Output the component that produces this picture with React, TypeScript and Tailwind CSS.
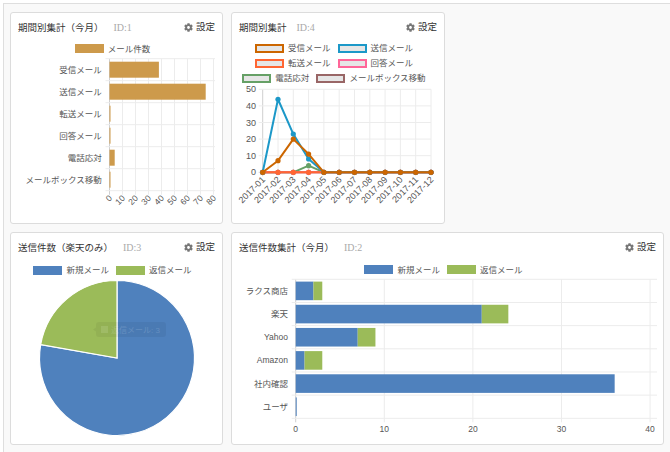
import type { ReactNode } from "react"
import { FaCog } from "react-icons/fa"

const BAR_TAN = "#cd9a4b"
const BLUE = "#4f81bd"
const GREEN = "#9bbb59"

function Card({
  title,
  id,
  className,
  children,
}: {
  title: string
  id: string
  className: string
  children: ReactNode
}) {
  return (
    <div className={`flex flex-col rounded-[3px] border border-[#dcdcdc] bg-white ${className}`}>
      <div className="flex h-[29px] shrink-0 items-center justify-between px-[7px]">
        <div className="flex items-baseline gap-[10px]">
          <span className="text-[9.5px] text-[#333]">{title}</span>
          <span className="font-['Liberation_Serif',serif] text-[10px] text-[#aaa]">{id}</span>
        </div>
        <div className="flex items-center gap-[3px] text-[9.5px] text-[#333]">
          <FaCog className="h-[9px] w-[9px] text-[#777]" />
          設定
        </div>
      </div>
      {children}
    </div>
  )
}

function LegendItem({ label, fill, stroke }: { label: string; fill: string; stroke?: string }) {
  return (
    <div className="flex items-center gap-[4px]">
      <span
        className={`block h-[9px] w-[29px] ${stroke ? "border-2" : ""}`}
        style={{ backgroundColor: fill, borderColor: stroke }}
      />
      <span className="text-[8.5px] leading-[10px] text-[#555]">{label}</span>
    </div>
  )
}

// 期間別集計（今月）: horizontal bars
function PeriodBarChart() {
  const x0 = 98.5
  const top = 4.7
  const rowH = 22
  const labels = ["受信メール", "送信メール", "転送メール", "回答メール", "電話応対", "メールボックス移動"]
  const values = [38, 74, 0, 0, 4, 0]
  const bottom = top + rowH * 6
  return (
    <svg width={211} height={169} className="block">
      {Array.from({ length: 9 }).map((_, i) => (
        <line
          key={i}
          x1={x0 + i * 13}
          x2={x0 + i * 13}
          y1={top}
          y2={bottom + 4}
          stroke={i === 0 ? "#cfcfcf" : "#ececec"}
        />
      ))}
      {Array.from({ length: 7 }).map((_, k) => (
        <line key={k} x1={x0 - 4} x2={204} y1={top + k * rowH} y2={top + k * rowH} stroke="#ececec" />
      ))}
      {values.map((v, k) => (
        <rect key={k} x={x0} y={top + k * rowH + 3} width={Math.max(v * 1.3, 1)} height={16} fill={BAR_TAN} />
      ))}
      {labels.map((l, k) => (
        <text key={l} x={90.7} y={top + k * rowH + 11} dy="0.35em" textAnchor="end" fontSize={8.5} fill="#555">
          {l}
        </text>
      ))}
      {Array.from({ length: 9 }).map((_, i) => {
        const x = x0 + i * 13 + 3
        const y = bottom + 8
        return (
          <text key={i} x={x} y={y} textAnchor="end" fontSize={8.5} fill="#555" transform={`rotate(-45 ${x} ${y})`}>
            {i * 10}
          </text>
        )
      })}
    </svg>
  )
}

// 期間別集計: line chart
function PeriodLineChart() {
  const xs = Array.from({ length: 12 }).map((_, i) => 30.7 + i * 15.3)
  const y0 = 88.3
  const yv = (v: number) => y0 - v * 1.66
  const zero = Array(12).fill(0)
  const sets = [
    { color: "#996666", data: zero },
    { color: "#66a066", data: [0, 0, 0, 4, 0, 0, 0, 0, 0, 0, 0, 0] },
    { color: "#ff6699", data: zero },
    { color: "#ff6633", data: zero },
    { color: "#1c98c8", data: [0, 44, 23, 8, 0, 0, 0, 0, 0, 0, 0, 0] },
    { color: "#cc6600", data: [0, 7, 20, 11, 0, 0, 0, 0, 0, 0, 0, 0] },
  ]
  return (
    <svg width={212} height={139} className="block">
      {xs.map((x, i) => (
        <line key={i} x1={x} x2={x} y1={yv(50)} y2={y0 + 4} stroke={i === 0 ? "#cfcfcf" : "#ececec"} />
      ))}
      {[0, 10, 20, 30, 40, 50].map((v) => (
        <g key={v}>
          <line x1={26.7} x2={199} y1={yv(v)} y2={yv(v)} stroke={v === 0 ? "#cfcfcf" : "#ececec"} />
          <text x={24} y={yv(v)} dy="0.35em" textAnchor="end" fontSize={9} fill="#555">
            {v}
          </text>
        </g>
      ))}
      {sets.map((s) => (
        <g key={s.color}>
          <polyline
            points={s.data.map((v, i) => `${xs[i]},${yv(v)}`).join(" ")}
            fill="none"
            stroke={s.color}
            strokeWidth={2}
            strokeLinejoin="round"
          />
          {s.data.map((v, i) => (
            <circle key={i} cx={xs[i]} cy={yv(v)} r={2.6} fill={s.color} />
          ))}
        </g>
      ))}
      {xs.map((x, i) => {
        const tx = x + 3
        const ty = y0 + 8
        return (
          <text key={i} x={tx} y={ty} textAnchor="end" fontSize={9} fill="#555" transform={`rotate(-45 ${tx} ${ty})`}>
            {`2017-${String(i + 1).padStart(2, "0")}`}
          </text>
        )
      })}
    </svg>
  )
}

// 送信件数（楽天のみ）: pie
function RakutenPie() {
  const cx = 106
  const cy = 82
  const r = 77.5
  const a = (190 * Math.PI) / 180
  const ex = cx + r * Math.cos(a)
  const ey = cy + r * Math.sin(a)
  return (
    <svg width={211} height={168} className="block">
      <path d={`M${cx},${cy} L${cx},${cy - r} A${r},${r} 0 1 1 ${ex},${ey} Z`} fill={BLUE} stroke="#fff" strokeWidth={1.2} />
      <path d={`M${cx},${cy} L${ex},${ey} A${r},${r} 0 0 1 ${cx},${cy - r} Z`} fill={GREEN} stroke="#fff" strokeWidth={1.2} />
      {/* fading tooltip */}
      <g opacity={0.4}>
        <path d="M88,46 h64 a3,3 0 0 1 3,3 v9 a3,3 0 0 1 -3,3 h-64 a3,3 0 0 1 -3,-3 v-2.5 l-3,-2 l3,-2 v-2.5 a3,3 0 0 1 3,-3 z" fill="rgba(0,0,0,0.12)" />
        <rect x={90} y={50} width={7} height={7} fill="rgba(255,255,255,0.25)" />
        <text x={100} y={56.5} fontSize={8} fill="rgba(255,255,255,0.35)">
          返信メール: 3
        </text>
      </g>
    </svg>
  )
}

// 送信件数集計（今月）: stacked horizontal bars
function SendStackChart() {
  const x0 = 63.7
  const unit = 8.86
  const top = 3.3
  const rowH = 23.17
  const rows = [
    { label: "ラクス商店", a: 2, b: 1 },
    { label: "楽天", a: 21, b: 3 },
    { label: "Yahoo", a: 7, b: 2 },
    { label: "Amazon", a: 1, b: 2 },
    { label: "社内確認", a: 36, b: 0 },
    { label: "ユーザ", a: 0, b: 0 },
  ]
  const bottom = top + rowH * 6
  return (
    <svg width={431} height={168} className="block">
      {[0, 10, 20, 30, 40].map((v) => (
        <g key={v}>
          <line
            x1={x0 + v * unit}
            x2={x0 + v * unit}
            y1={top}
            y2={bottom + 4}
            stroke={v === 0 ? "#cfcfcf" : "#ececec"}
          />
          <text x={x0 + v * unit} y={bottom + 13.5} textAnchor="middle" fontSize={8.5} fill="#555">
            {v}
          </text>
        </g>
      ))}
      {Array.from({ length: 7 }).map((_, k) => (
        <line key={k} x1={x0 - 4} x2={425} y1={top + k * rowH} y2={top + k * rowH} stroke="#ececec" />
      ))}
      {rows.map((r, k) => {
        const y = top + k * rowH + 2.3
        return (
          <g key={r.label}>
            <rect x={x0} y={y} width={Math.max(r.a * unit, 1)} height={18.6} fill={BLUE} />
            {r.b > 0 && <rect x={x0 + r.a * unit} y={y} width={r.b * unit} height={18.6} fill={GREEN} />}
            <text x={56} y={top + k * rowH + rowH / 2} dy="0.35em" textAnchor="end" fontSize={8.5} fill="#555">
              {r.label}
            </text>
          </g>
        )
      })}
    </svg>
  )
}

export default function App() {
  return (
    <div className="h-[452px] w-[670px] overflow-hidden bg-white font-['Liberation_Sans','Noto_Sans_CJK_JP',sans-serif]">
      <div className="ml-[3px] mt-[3px] h-[460px] w-[680px] border-l border-t border-[#dedede] bg-[#f9f9f9] pl-[6px] pt-[8px]">
        <div className="flex flex-col gap-[8px]">
          <div className="flex gap-[8px]">
            <Card title="期間別集計（今月）" id="ID:1" className="h-[212px] w-[213px]">
              <div className="flex h-[12px] justify-center pr-[8px] pt-[1px]">
                <LegendItem label="メール件数" fill={BAR_TAN} />
              </div>
              <PeriodBarChart />
            </Card>
            <Card title="期間別集計" id="ID:4" className="h-[212px] w-[214px]">
              <div className="flex h-[42px] flex-col items-center gap-[5px] pr-[8px] pt-[1px]">
                <div className="flex gap-[7px]">
                  <LegendItem label="受信メール" fill="#e6e6e6" stroke="#cc6600" />
                  <LegendItem label="送信メール" fill="#e6e6e6" stroke="#1c98c8" />
                </div>
                <div className="flex gap-[7px]">
                  <LegendItem label="転送メール" fill="#e6e6e6" stroke="#ff6633" />
                  <LegendItem label="回答メール" fill="#e6e6e6" stroke="#ff6699" />
                </div>
                <div className="flex gap-[7px]">
                  <LegendItem label="電話応対" fill="#e6e6e6" stroke="#66a066" />
                  <LegendItem label="メールボックス移動" fill="#e6e6e6" stroke="#996666" />
                </div>
              </div>
              <PeriodLineChart />
            </Card>
          </div>
          <div className="flex gap-[8px]">
            <Card title="送信件数（楽天のみ）" id="ID:3" className="h-[213px] w-[213px]">
              <div className="flex h-[14px] justify-center gap-[7px] pr-[8px] pt-[2px]">
                <LegendItem label="新規メール" fill={BLUE} />
                <LegendItem label="返信メール" fill={GREEN} />
              </div>
              <RakutenPie />
            </Card>
            <Card title="送信件数集計（今月）" id="ID:2" className="h-[213px] w-[433px]">
              <div className="flex h-[14px] justify-center gap-[7px] pr-[8px] pt-[1px]">
                <LegendItem label="新規メール" fill={BLUE} />
                <LegendItem label="返信メール" fill={GREEN} />
              </div>
              <SendStackChart />
            </Card>
          </div>
        </div>
      </div>
    </div>
  )
}
